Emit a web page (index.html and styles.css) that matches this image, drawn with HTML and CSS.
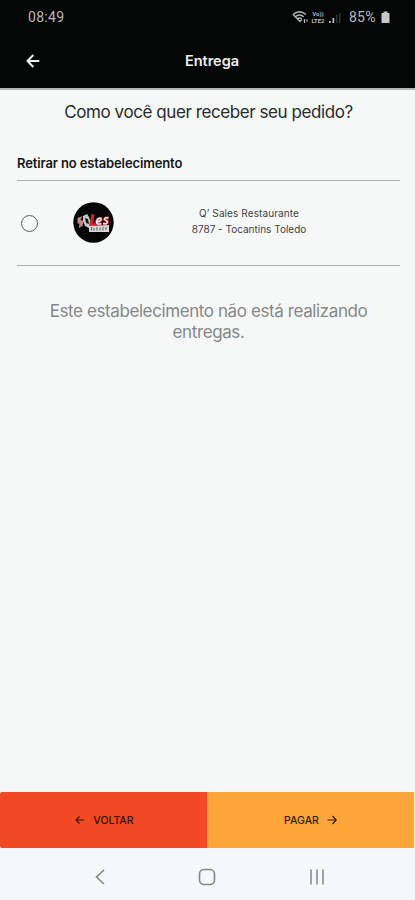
FILE: index.html
```html
<!DOCTYPE html>
<html lang="pt-BR">
<head>
<meta charset="utf-8">
<meta name="viewport" content="width=device-width, initial-scale=1">
<title>Entrega</title>
<link rel="stylesheet" href="styles.css">
</head>
<body>
<div class="screen">
  <div class="top">
    <div class="status">
      <span class="clock">08:49</span>
      <div class="indicators">
        <svg class="wifi" width="17" height="14" viewBox="0 0 17 14" fill="none" stroke="#b5b5b5" stroke-width="1.4">
          <path d="M1 4.5Q7.5-1 14 4.5M3.2 6.8Q7.5 3 11.8 6.800M5.300 9Q7.500 7 9.700 9"/>
          <path d="M1 4.500L8 11.500l2-2M12.500 9v4M15 9.500v2" stroke-width="1.300"/>
        </svg>
        <span class="lte"><span>Vo))</span><span>LTE2</span></span>
        <svg class="signal" width="13" height="12" viewBox="0 0 13 12">
          <path d="M1 9h1.700v2H1zM4.500 6h1.700v5H4.500z" fill="#bdbdbd"/>
          <path d="M8 3h1.500v8H8zM11 1h1.500v10H11z" fill="#303232"/>
        </svg>
        <span class="percent">85%</span>
        <svg class="battery" width="9" height="13" viewBox="0 0 9 13" fill="#c8c8c8"><path d="M2.500.5h4V2h1.500q.5 0 .5.500v9q0 .5-.5.500H1q-.5 0-.5-.5v-9Q.5 2 1 2h1.500z"/></svg>
      </div>
    </div>
    <header class="bar">
      <svg class="back" width="14" height="14" viewBox="0 0 14 14" fill="none" stroke="#ececec" stroke-width="2"><path d="M7.300 1L1.500 7l5.800 6M1.800 7H13.300"/></svg>
      <h1>Entrega</h1>
    </header>
  </div>
  <main>
    <h2 class="question">Como você quer receber seu pedido?</h2>
    <h3 class="section">Retirar no estabelecimento</h3>
    <div class="option">
      <span class="radio"></span>
      <svg class="logo" width="41" height="41" viewBox="0 0 41 41">
        <circle cx="20.500" cy="20.500" r="20.200" fill="#050505"/>
        <path d="M4.500 16l5-2-2 4 3 1-1 5-4 2 1-4-2-1z" fill="#c9878d"/>
        <path d="M10 14l4-2 2 3 2 6-2 5-4-2-2-5z" fill="#bfcac7"/>
        <path d="M12 16l3 1 1 5-3-1z" fill="#171717"/>
        <path d="M18.500 12l3 .5-1.500 9 4-1-1 3-7 1z" fill="#d2232d"/>
        <path d="M24 20q5-1 4-3.500-3-1-4.500 3 0 4 5 2M35.500 16q-4-1-4 1.500l3 2q0 3-4.500 2" fill="none" stroke="#d2232d" stroke-width="3"/>
        <path d="M24 20q5-1 4-3.500-3-1-4.500 3 0 4 5 2M35.500 16q-4-1-4 1.500l3 2q0 3-4.500 2" fill="none" stroke="#f5eeee" stroke-width="1.400"/>
        <path d="M16 24l20-1v7H16z" fill="#d9d9d9"/>
        <path d="M18.500 25v3.500M21 26v2.500M24 25v3.500M27 25.500v3M30 25v3.500M33 25v3" stroke="#666" stroke-width="1.100"/>
      </svg>
      <div class="place"><span class="name">Q’ Sales Restaurante</span><span class="address">8787 - Tocantins Toledo</span></div>
    </div>
    <p class="notice"><span class="first">Este estabelecimento não está realizando</span> <span class="last">entregas.</span></p>
  </main>
  <div class="actions">
    <div class="button voltar">
      <svg width="10" height="10" viewBox="0 0 10 10" fill="none" stroke="#35100a" stroke-width="1.100"><path d="M4.500 1.500L1 5l3.500 3.500M1.200 5h8"/></svg>
      <span>VOLTAR</span>
    </div>
    <div class="button pagar">
      <span>PAGAR</span>
      <svg width="10" height="10" viewBox="0 0 10 10" fill="none" stroke="#2b1b08" stroke-width="1.200"><path d="M5.500 1l3.700 4-3.700 4M9 5H.5"/></svg>
    </div>
  </div>
  <nav class="nav">
    <svg width="10" height="16" viewBox="0 0 10 16" fill="none" stroke="#858686" stroke-width="1.600"><path d="M9 1L1.500 8 9 15"/></svg>
    <svg width="18" height="18" viewBox="0 0 18 18" fill="none" stroke="#858686" stroke-width="1.600"><rect x="1.500" y="1.500" width="15" height="15" rx="4.500"/></svg>
    <svg width="16" height="16" viewBox="0 0 16 16" fill="none" stroke="#929393" stroke-width="1.700"><path d="M2 .5v15M8 .5v15M14 .5v15"/></svg>
  </nav>
</div>
</body>
</html>
```
FILE: styles.css
```css
* { box-sizing: border-box; }
body { margin: 0; background: #f6f8f8; font-family: Inter, "Liberation Sans", sans-serif; }
h1, h2, h3, p { margin: 0; white-space: nowrap; }
svg { display: block; flex: none; }
.screen { width: 415px; height: 900px; display: flex; flex-direction: column; overflow: hidden; }
.top { height: 90px; background: #040606; border-bottom: 2px solid #b5b6b6; flex: none; }
.status { height: 34px; padding: 0 25px 0 28px; display: flex; justify-content: space-between; align-items: center; color: #b8b8b8; font-family: Roboto, sans-serif; font-size: 14px; }
.clock { letter-spacing: .3px; }
.indicators { display: flex; align-items: center; }
.wifi { margin-right: 1px; }
.lte { display: flex; flex-direction: column; align-items: center; width: 16px; font-size: 6px; line-height: 7px; font-weight: 700; }
.signal { margin: 2px 8px 0 2px; }
.percent { width: 29px; letter-spacing: .2px; }
.battery { margin-left: 3px; }
.bar { height: 54px; display: grid; grid-template-columns: 60px 1fr 51px; align-items: center; }
.back { margin-left: 26px; }
.bar h1 { text-align: center; color: #ededed; font-size: 14.500px; font-weight: 600; line-height: 20px; }
main { flex: 1; padding: 0 15px 0 17px; }
.question { margin-top: 11px; text-align: center; font-size: 17px; line-height: 22px; font-weight: 400; color: #292a2a; letter-spacing: -.42px; }
.section { margin-top: 31px; height: 27px; font-size: 13px; line-height: 18px; font-weight: 600; color: #151616; border-bottom: 1px solid #b2b4b4; letter-spacing: -.13px; }
.option { height: 85px; border-bottom: 1px solid #aeb0b0; display: flex; align-items: center; }
.radio { width: 17px; height: 17px; border: 1.500px solid #5b5c5c; border-radius: 50%; margin-left: 4px; flex: none; }
.logo { margin: 0 0 2px 35px; }
.place { width: 152px; margin-left: 59px; display: flex; flex-direction: column; align-items: center; font-size: 10px; line-height: 16px; color: #3f4040; white-space: nowrap; margin-bottom: 4px; }
.name { letter-spacing: .1px; }
.notice { margin-top: 35px; text-align: center; font-size: 17px; line-height: 21px; color: #858787; letter-spacing: -.4px; }
.notice span { display: block; }
.actions { height: 56px; display: grid; grid-template-columns: 207px 207px; flex: none; }
.button { display: flex; align-items: center; justify-content: center; gap: 8px; font-size: 10.500px; font-weight: 500; }
.voltar { background: #f04923; color: #35100a; border-radius: 2px 0 0 2px; padding-left: 2px; }
.pagar { background: #fca63a; color: #2b1b08; }
.nav { height: 52px; background: #f5f7f9; display: grid; grid-template-columns: 10px 18px 16px; column-gap: 93px; align-items: center; padding: 5px 0 0 95px; flex: none; }
```
